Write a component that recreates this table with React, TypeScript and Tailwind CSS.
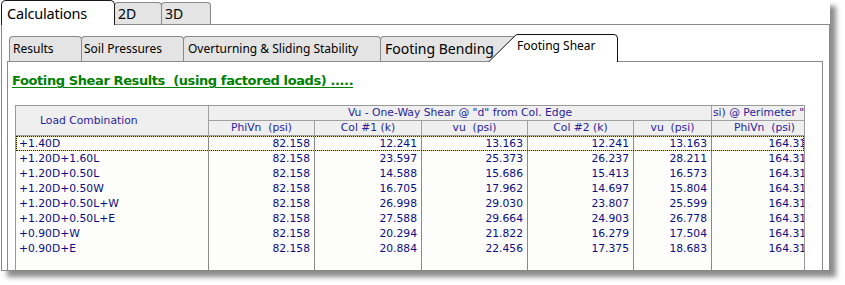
import React from "react";

const rows: string[][] = [
  ["+1.40D", "82.158", "12.241", "13.163", "12.241", "13.163", "164.319"],
  ["+1.20D+1.60L", "82.158", "23.597", "25.373", "26.237", "28.211", "164.319"],
  ["+1.20D+0.50L", "82.158", "14.588", "15.686", "15.413", "16.573", "164.319"],
  ["+1.20D+0.50W", "82.158", "16.705", "17.962", "14.697", "15.804", "164.319"],
  ["+1.20D+0.50L+W", "82.158", "26.998", "29.030", "23.807", "25.599", "164.319"],
  ["+1.20D+0.50L+E", "82.158", "27.588", "29.664", "24.903", "26.778", "164.319"],
  ["+0.90D+W", "82.158", "20.294", "21.822", "16.279", "17.504", "164.319"],
  ["+0.90D+E", "82.158", "20.884", "22.456", "17.375", "18.683", "164.319"],
];

const subHeads = ["PhiVn  (psi)", "Col #1 (k)", "vu  (psi)", "Col #2 (k)", "vu  (psi)", "PhiVn  (psi)"];

function GrayTab({ label, w, pl, big }: { label: string; w: string; pl: string; big?: boolean }) {
  return (
    <div
      className={`-ml-px h-[25px] shrink-0 bg-[#e4e4e4] border border-b-0 border-[#8a8a8a] rounded-t-[4px] whitespace-nowrap overflow-hidden ${w} ${pl} ${
        big ? "pt-[3px] text-[14px] leading-[18px]" : "pt-[4px] text-[12px] leading-[16px]"
      }`}
    >
      {label}
    </div>
  );
}

export default function App() {
  return (
    <div className="w-[845px] h-[285px] bg-white overflow-hidden">
      <div className="ml-px w-[829px] h-[271px] bg-white flex flex-col shadow-[6px_6px_5px_rgba(0,0,0,0.45)] font-[family-name:'Noto_Sans',sans-serif] text-black">
        {/* top tabs */}
        <div className="flex items-end h-[24px] shrink-0">
          <div className="relative z-10 -mb-px h-[25px] w-[114px] shrink-0 bg-white border border-b-0 border-[#1a1a1a] rounded-t-[5px] pl-[5px] pt-[3px] text-[14.5px] leading-[18px] tracking-[-0.2px]">
            Calculations
          </div>
          <div className="-ml-px h-[22px] w-[48px] shrink-0 bg-[#e4e4e4] border border-b-0 border-[#8a8a8a] rounded-t-[4px] pl-[3px] pt-[2px] text-[14px] leading-[18px]">
            2D
          </div>
          <div className="-ml-px h-[22px] w-[50px] shrink-0 bg-[#e4e4e4] border border-b-0 border-[#8a8a8a] rounded-t-[4px] pl-[3px] pt-[2px] text-[14px] leading-[18px]">
            3D
          </div>
        </div>

        {/* outer panel */}
        <div className="flex-1 min-h-0 border border-[#8a8a8a] flex flex-col pl-[5px] pr-[6px] pt-[9px] overflow-hidden">
          {/* inner tabs */}
          <div className="flex items-end h-[27px] shrink-0">
            <div className="ml-[3px] flex items-end">
              <GrayTab label="Results" w="w-[73px]" pl="pl-[3px]" />
              <GrayTab label="Soil Pressures" w="w-[103px]" pl="pl-[2px]" />
              <GrayTab label="Overturning & Sliding Stability" w="w-[198px]" pl="pl-[4px]" />
              <GrayTab label="Footing Bending" w="w-[136px]" pl="pl-[4px]" big />
            </div>
            <div className="relative z-10 -mb-px ml-[-28px] h-[28px] w-[130px] shrink-0 pl-[29px] pt-[4px] text-[12px] leading-[16px] whitespace-nowrap">
              <svg className="absolute inset-0" width="130" height="28" viewBox="0 0 130 28">
                <path
                  d="M0.5 28 L27 1.8 Q28 0.5 30 0.5 L126 0.5 Q129.5 0.5 129.5 4 L129.5 28 Z"
                  fill="#ffffff"
                  stroke="none"
                />
                <path
                  d="M0.5 28 L27 1.8 Q28 0.5 30 0.5 L126 0.5 Q129.5 0.5 129.5 4 L129.5 28"
                  fill="none"
                  stroke="#111111"
                  strokeWidth="1"
                />
              </svg>
              <span className="relative">Footing Shear</span>
            </div>
          </div>

          {/* inner panel */}
          <div className="flex-1 min-h-0 border border-b-0 border-[#8a8a8a] flex flex-col bg-white">
            <div className="pl-[4px] pt-[11px] h-[27px] shrink-0 font-[family-name:'DejaVu_Sans',sans-serif] font-bold text-[13px] tracking-[-0.4px] leading-[16px] text-[#008000] whitespace-pre">
              <span className="underline decoration-1 underline-offset-[2px]">Footing Shear Results  (using factored loads) .....</span>
            </div>

            {/* grid */}
            <div className="mt-[16px] ml-[7px] w-[790px] flex-1 min-h-0 flex flex-col overflow-hidden border-l border-r border-t border-[#999999] font-[family-name:'DejaVu_Sans',sans-serif] text-[10.75px] whitespace-pre">
              {/* header */}
              <div className="grid grid-cols-[193px_106px_107px_106px_106px_78px_106px] grid-rows-[15px_15px] shrink-0 bg-[#efefef] text-[#2a1e9c] leading-[14px]">
                <div className="row-span-2 border-r border-b border-[#a0a0a0] flex items-center pl-[24px]">Load Combination</div>
                <div className="col-span-5 border-r border-b border-[#a0a0a0] text-center">Vu - One-Way Shear @ "d" from Col. Edge</div>
                <div className="border-b border-[#a0a0a0] overflow-hidden pl-[1px] whitespace-nowrap">si) @ Perimeter "D/2"</div>
                {subHeads.map((h, i) => (
                  <div key={i} className="border-r border-b border-[#a0a0a0] text-center overflow-hidden">
                    {h}
                  </div>
                ))}
              </div>

              {/* body */}
              <div className="flex-1 min-h-0 flex flex-col bg-[#fdfdfb] text-[#0c0c82] leading-[15px]">
                {rows.map((r, ri) => (
                  <div key={ri} className="relative grid grid-cols-[193px_106px_107px_106px_106px_78px_106px] h-[15px] shrink-0">
                    {r.map((c, ci) => (
                      <div
                        key={ci}
                        className={`border-r border-[#8a8a8a] overflow-hidden ${ci === 0 ? "pl-[3px] text-left" : "pr-[4px] text-right"}`}
                      >
                        {c}
                      </div>
                    ))}
                    {ri === 0 && (
                      <>
                        <div className="pointer-events-none absolute inset-0 border border-[#e6dc78]" />
                        <div className="pointer-events-none absolute inset-0 border border-dotted border-[#1a1a1a]" />
                      </>
                    )}
                  </div>
                ))}
                <div className="flex-1 grid grid-cols-[193px_106px_107px_106px_106px_78px_106px]">
                  {[0, 1, 2, 3, 4, 5, 6].map((i) => (
                    <div key={i} className="border-r border-[#8a8a8a]" />
                  ))}
                </div>
              </div>
            </div>
          </div>
        </div>
      </div>
    </div>
  );
}
